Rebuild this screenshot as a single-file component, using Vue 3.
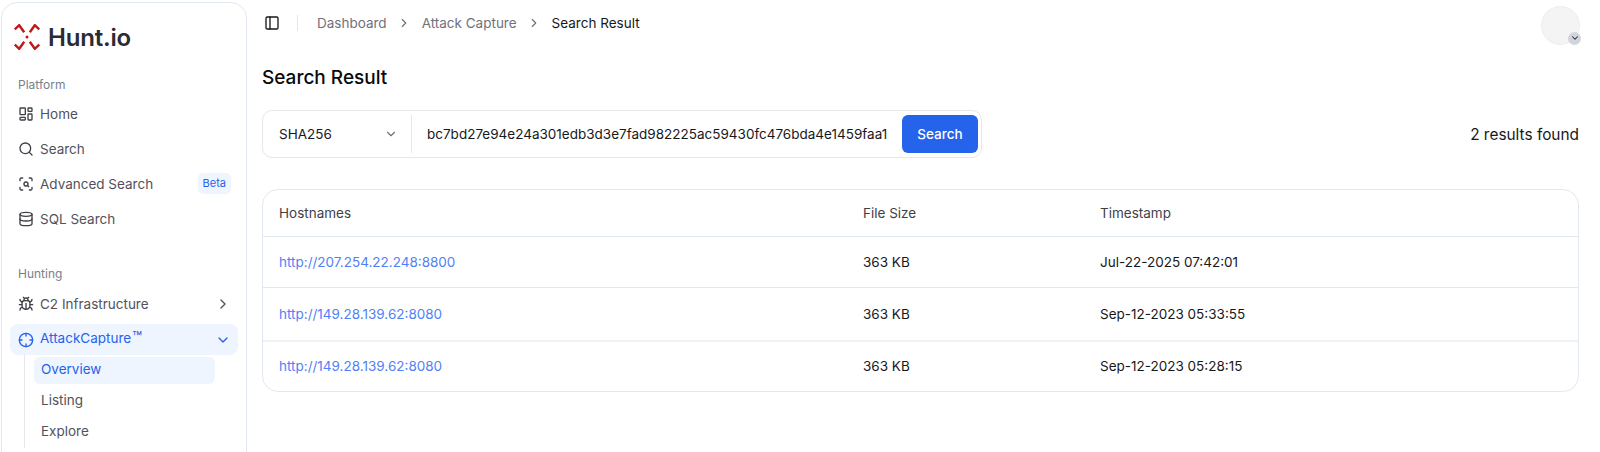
<script setup>
const platform = [
  { name: 'Home', icon: 'home' },
  { name: 'Search', icon: 'search' },
  { name: 'Advanced Search', icon: 'scan', badge: 'Beta' },
  { name: 'SQL Search', icon: 'db' },
]

const rows = [
  { host: 'http://207.254.22.248:8800', size: '363 KB', time: 'Jul-22-2025 07:42:01' },
  { host: 'http://149.28.139.62:8080', size: '363 KB', time: 'Sep-12-2023 05:33:55' },
  { host: 'http://149.28.139.62:8080', size: '363 KB', time: 'Sep-12-2023 05:28:15' },
]
</script>

<template>
  <div class="page">
    <aside class="sidebar">
      <div class="brand">
        <svg class="logo" viewBox="0 0 26 26" fill="none" stroke="#c01818" stroke-width="2.400">
          <path d="M0.800 5.500 L5.200 1.200 L10.200 8.300" />
          <path d="M25.200 5.500 L20.800 1.200 L15.800 8.300" />
          <path d="M0.800 20.500 L5.200 24.800 L10.200 17.700" />
          <path d="M25.200 20.500 L20.800 24.800 L15.800 17.700" />
          <circle cx="13" cy="13" r="1.500" fill="#c01818" stroke="none" />
        </svg>
        <span class="brand-name">Hunt.io</span>
      </div>

      <div class="group-label">Platform</div>
      <a v-for="item in platform" :key="item.name" class="nav-item">
        <svg class="nav-icon" viewBox="0 0 24 24" fill="none" stroke="currentColor" stroke-width="2" stroke-linecap="round" stroke-linejoin="round">
          <template v-if="item.icon === 'home'">
            <rect x="3" y="3" width="8" height="10" rx="1" />
            <rect x="15" y="3" width="6" height="5" rx="1" />
            <rect x="15" y="12" width="6" height="9" rx="1" />
            <rect x="3" y="17" width="8" height="4" rx="1" />
          </template>
          <template v-else-if="item.icon === 'search'">
            <circle cx="11" cy="11" r="8" />
            <path d="m21 21-4.300-4.300" />
          </template>
          <template v-else-if="item.icon === 'scan'">
            <path d="M3 7V5a2 2 0 0 1 2-2h2M17 3h2a2 2 0 0 1 2 2v2M21 17v2a2 2 0 0 1-2 2h-2M7 21H5a2 2 0 0 1-2-2v-2" />
            <circle cx="12" cy="12" r="3" />
            <path d="m16 16-1.900-1.900" />
          </template>
          <template v-else>
            <ellipse cx="12" cy="5" rx="9" ry="3" />
            <path d="M3 5v14a9 3 0 0 0 18 0V5" />
            <path d="M3 12a9 3 0 0 0 18 0" />
          </template>
        </svg>
        <span>{{ item.name }}</span>
        <span v-if="item.badge" class="badge">{{ item.badge }}</span>
      </a>

      <div class="group-label hunting">Hunting</div>
      <a class="nav-item">
        <svg class="nav-icon" viewBox="0 0 24 24" fill="none" stroke="currentColor" stroke-width="2" stroke-linecap="round" stroke-linejoin="round">
          <path d="m8 2 1.900 1.900M14.100 3.900 16 2M9 7.100V6a3 3 0 1 1 6 0v1.100" />
          <path d="M12 20c-3.300 0-6-2.700-6-6v-3a4 4 0 0 1 4-4h4a4 4 0 0 1 4 4v3c0 3.300-2.700 6-6 6" />
          <path d="M12 20v-9M6.500 9C4.600 8.800 3 7.100 3 5M6 13H2M3 21c0-2.100 1.700-3.900 3.800-4M20.970 5c0 2.100-1.600 3.800-3.500 4M22 13h-4M17.200 17c2.100.100 3.800 1.900 3.800 4" />
        </svg>
        <span>C2 Infrastructure</span>
        <svg class="chev" viewBox="0 0 24 24" fill="none" stroke="currentColor" stroke-width="2" stroke-linecap="round" stroke-linejoin="round"><path d="m9 18 6-6-6-6" /></svg>
      </a>
      <a class="nav-item active">
        <svg class="nav-icon" viewBox="0 0 24 24" fill="none" stroke="currentColor" stroke-width="2" stroke-linecap="round" stroke-linejoin="round">
          <circle cx="12" cy="12" r="10" />
          <path d="M22 12h-4M6 12H2M12 6V2M12 22v-4" />
        </svg>
        <span class="active-label">AttackCapture<span class="tm">™</span></span>
        <svg class="chev" viewBox="0 0 24 24" fill="none" stroke="currentColor" stroke-width="2" stroke-linecap="round" stroke-linejoin="round"><path d="m6 9 6 6 6-6" /></svg>
      </a>
      <div class="sub-list">
        <a class="sub-item current">Overview</a>
        <a class="sub-item">Listing</a>
        <a class="sub-item">Explore</a>
      </div>
    </aside>

    <main class="main">
      <header class="topbar">
        <svg class="toggle" viewBox="0 0 24 24" fill="none" stroke="currentColor" stroke-width="2" stroke-linecap="round" stroke-linejoin="round">
          <rect x="3" y="3" width="18" height="18" rx="2" />
          <path d="M9 3v18" />
        </svg>
        <span class="top-divider"></span>
        <nav class="crumbs">
          <span>Dashboard</span>
          <svg class="crumb-sep" viewBox="0 0 24 24" fill="none" stroke="currentColor" stroke-width="2" stroke-linecap="round" stroke-linejoin="round"><path d="m9 18 6-6-6-6" /></svg>
          <span>Attack Capture</span>
          <svg class="crumb-sep" viewBox="0 0 24 24" fill="none" stroke="currentColor" stroke-width="2" stroke-linecap="round" stroke-linejoin="round"><path d="m9 18 6-6-6-6" /></svg>
          <span class="crumb-current">Search Result</span>
        </nav>
        <div class="avatar">
          <span class="avatar-badge">
            <svg viewBox="0 0 24 24" fill="none" stroke="#1f2937" stroke-width="2.500" stroke-linecap="round" stroke-linejoin="round"><path d="m6 9 6 6 6-6" /></svg>
          </span>
        </div>
      </header>

      <h1 class="title">Search Result</h1>

      <div class="search-row">
        <div class="search-box">
          <div class="select">
            <span>SHA256</span>
            <svg viewBox="0 0 24 24" fill="none" stroke="#6b7280" stroke-width="2" stroke-linecap="round" stroke-linejoin="round"><path d="m6 9 6 6 6-6" /></svg>
          </div>
          <div class="hash">bc7bd27e94e24a301edb3d3e7fad982225ac59430fc476bda4e1459faa1</div>
          <button class="search-btn">Search</button>
        </div>
        <div class="count">2 results found</div>
      </div>

      <div class="table-card">
        <div class="t-row t-head">
          <div>Hostnames</div>
          <div>File Size</div>
          <div>Timestamp</div>
        </div>
        <div v-for="(r, i) in rows" :key="i" class="t-row t-body">
          <a class="host">{{ r.host }}</a>
          <div>{{ r.size }}</div>
          <div>{{ r.time }}</div>
        </div>
      </div>
    </main>
  </div>
</template>

<style scoped>
.page {
  display: flex;
  height: 452px;
  overflow: hidden;
  background: #fff;
  font-family: Inter, "Liberation Sans", sans-serif;
  color: #111827;
}

.sidebar {
  box-sizing: border-box;
  flex: 0 0 246px;
  height: 470px;
  margin: 2px 0 0 1px;
  padding: 21px 8px 0 9px;
  border: 1px solid #e2e8f0;
  border-radius: 16px;
  background: #fff;
}

.brand {
  display: flex;
  align-items: center;
  gap: 8px;
  padding-left: 3px;
  height: 26px;
}
.logo {
  width: 26px;
  height: 26px;
}
.brand-name {
  font-size: 24px;
  font-weight: 600;
  color: #2b2b33;
  letter-spacing: -0.2px;
}

.group-label {
  margin: 27px 0 3px 7px;
  font-size: 12px;
  line-height: 16px;
  color: #7c8087;
}
.group-label.hunting {
  margin-top: 30px;
  margin-bottom: 4px;
}

.nav-item {
  display: flex;
  align-items: center;
  height: 35px;
  padding: 0 7px;
  font-size: 13.500px;
  color: #52525b;
}
.nav-item.active {
  height: 31px;
  margin: 3px 0 0 -1px;
  padding-left: 8px;
  border-radius: 8px;
  background: #eff5ff;
  color: #2563eb;
}
.nav-icon {
  flex: none;
  width: 16px;
  height: 16px;
  margin-right: 6px;
  color: #3f3f46;
}
.active .nav-icon {
  color: #2563eb;
}
.active-label {
  margin-top: -3px;
}
.tm {
  font-size: 16px;
  line-height: 0;
  margin-left: 1px;
}
.badge {
  margin-left: auto;
  padding: 0 5px;
  height: 21px;
  line-height: 21px;
  border-radius: 5px;
  background: #eff5ff;
  color: #2563eb;
  font-size: 11px;
}
.chev {
  width: 16px;
  height: 16px;
  margin-left: auto;
}

.sub-list {
  margin-left: 13px;
  padding: 2px 0 0 9px;
  border-left: 1px solid #e5e7eb;
  display: flex;
  flex-direction: column;
  width: 181px;
}
.sub-item {
  height: 31px;
  line-height: 29px;
  padding-left: 7px;
  font-size: 13.500px;
  color: #52525b;
}
.sub-item.current {
  height: 27px;
  line-height: 25px;
  margin-bottom: 2px;
  border-radius: 6px;
  background: #eff5ff;
  color: #2563eb;
}

.main {
  flex: 1;
  min-width: 0;
  padding: 0 21px 0 15px;
}

.topbar {
  display: flex;
  align-items: center;
  height: 45px;
  padding-left: 2px;
}
.toggle {
  width: 16px;
  height: 16px;
  color: #18181b;
}
.top-divider {
  width: 1px;
  height: 16px;
  margin: 0 19px 0 17px;
  background: #e5e7eb;
}
.crumbs {
  display: flex;
  align-items: center;
  gap: 10.500px;
  font-size: 13.500px;
  color: #71717a;
}
.crumb-sep {
  width: 14px;
  height: 14px;
}
.crumb-current {
  color: #18181b;
}
.avatar {
  position: relative;
  box-sizing: border-box;
  width: 39px;
  height: 39px;
  margin: 5px -1px 0 auto;
  border: 1px solid #eeeeef;
  border-radius: 50%;
  background: #f4f4f5;
}
.avatar-badge {
  position: absolute;
  right: -2px;
  bottom: -1px;
  width: 13px;
  height: 13px;
  border-radius: 50%;
  background: #d1d5db;
  display: flex;
  align-items: center;
  justify-content: center;
}
.avatar-badge svg {
  width: 10px;
  height: 10px;
}

.title {
  margin: 21px 0 0;
  font-size: 19px;
  line-height: 24px;
  font-weight: 500;
  color: #09090b;
}

.search-row {
  display: flex;
  align-items: center;
  justify-content: space-between;
  margin-top: 20px;
}
.search-box {
  box-sizing: border-box;
  display: flex;
  align-items: center;
  width: 720px;
  height: 48px;
  padding: 4px 3px 4px 0;
  border: 1px solid #e5e7eb;
  border-radius: 10px;
}
.select {
  box-sizing: border-box;
  display: flex;
  align-items: center;
  justify-content: space-between;
  width: 149px;
  height: 38px;
  padding: 0 13px 1px 16px;
  border-right: 1px solid #e5e7eb;
  font-size: 13.500px;
  color: #18181b;
}
.select svg {
  width: 14px;
  height: 14px;
}
.hash {
  flex: 1;
  padding: 0 0 1px 15px;
  font-size: 13.500px;
  color: #18181b;
  white-space: nowrap;
}
.search-btn {
  width: 76px;
  height: 38px;
  border: 0;
  border-radius: 6px;
  background: #2563eb;
  color: #fff;
  font-family: inherit;
  font-size: 13.500px;
  font-weight: 500;
}
.count {
  font-size: 15.400px;
  color: #18181b;
}

.table-card {
  margin-top: 31px;
  border: 1px solid #e2e8f0;
  border-radius: 16px;
  overflow: hidden;
}
.t-row {
  display: grid;
  grid-template-columns: 584px 237px 1fr;
  align-items: center;
  padding-left: 16px;
  font-size: 13.500px;
}
.t-head {
  height: 46px;
  color: #3f3f46;
}
.t-body {
  height: 51px;
  padding-bottom: 1px;
  box-sizing: border-box;
  border-top: 1px solid #e2e8f0;
  color: #18181b;
}
.t-body:nth-child(3) {
  height: 53px;
  border-top: 1px solid #e2e8f0;
}
.t-body:last-child {
  border-top: 2px solid #eef2f7;
}
.host {
  color: #4f81f7;
}
</style>

<style>
body {
  overflow: hidden;
}
</style>
